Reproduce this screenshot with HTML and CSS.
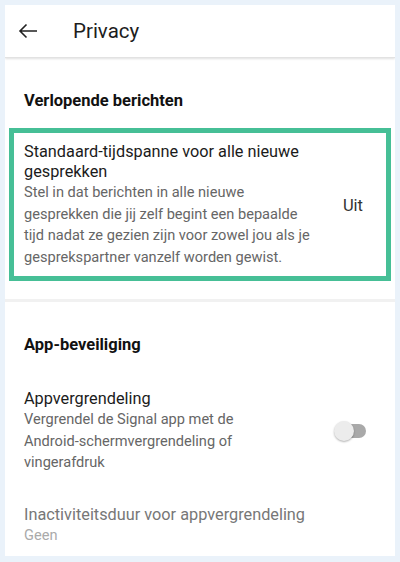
FILE: index.html
```html
<!DOCTYPE html>
<html lang="nl">
<head>
  <meta charset="UTF-8">
  <title>Privacy</title>
  <link rel="stylesheet" href="styles.css">
</head>
<body>
  <div class="screen">
    <div class="toolbar">
      <svg class="back" width="20" height="16" viewBox="0 0 20 16">
        <path d="M19 8H2M8.5 1.5L2 8l6.5 6.5" fill="none" stroke="#222" stroke-width="1.6"/>
      </svg>
      <div class="title">Privacy</div>
    </div>

    <div class="section">
      <div class="section-title">Verlopende berichten</div>
      <div class="pref highlight">
        <div class="pref-text">
          <div class="pref-title">Standaard-tijdspanne voor alle nieuwe gesprekken</div>
          <div class="pref-summary">Stel in dat berichten in alle nieuwe gesprekken die jij zelf begint een bepaalde tijd nadat ze gezien zijn voor zowel jou als je gesprekspartner vanzelf worden gewist.</div>
        </div>
        <div class="pref-value">Uit</div>
      </div>
    </div>

    <div class="divider"></div>

    <div class="section">
      <div class="section-title">App-beveiliging</div>
      <div class="pref lock">
        <div class="pref-text">
          <div class="pref-title">Appvergrendeling</div>
          <div class="pref-summary">Vergrendel de Signal app met de Android-schermvergrendeling of vingerafdruk</div>
        </div>
        <div class="switch"><div class="thumb"></div></div>
      </div>
      <div class="pref disabled">
        <div class="pref-text">
          <div class="pref-title">Inactiviteitsduur voor appvergrendeling</div>
          <div class="pref-summary">Geen</div>
        </div>
      </div>
    </div>
  </div>
</body>
</html>
```

FILE: styles.css
```css
html, body {
  margin: 0;
  padding: 0;
  background: #eaf2fa;
}

body {
  font-family: Roboto, "Noto Sans", Arial, sans-serif;
  padding: 5px 5px 6px 5px;
  height: 562px;
  box-sizing: border-box;
}

.screen {
  background: white;
  height: 551px;
  overflow: hidden;
}

.toolbar {
  height: 52px;
  display: flex;
  align-items: center;
  border-bottom: 1px solid #e2e2e2;
  box-shadow: 0 1px 2px rgba(0,0,0,0.12);
}

.back {
  margin-left: 13px;
}

.title {
  margin-left: 35px;
  font-size: 20.5px;
  color: #1d1d1d;
}

.section-title {
  font-size: 16.5px;
  font-weight: bold;
  color: #111;
  padding: 33px 0 0 19px;
  height: 37px;
}

.pref {
  display: flex;
  align-items: center;
  padding: 0 19px;
}

.highlight {
  margin: 0 4px;
  padding: 9px 23px 8px 10px;
  border: 5px solid #46bf96;
}

.lock {
  margin-top: 17px;
  padding-right: 29px;
}

.lock .pref-summary {
  max-width: 250px;
}

.pref-text {
  flex: 1;
}

.pref-title {
  font-size: 16.3px;
  line-height: 20px;
  color: #1b1b1b;
}

.pref-summary {
  font-size: 14.6px;
  line-height: 21.5px;
  color: #666;
  max-width: 287px;
}

.pref-value {
  font-size: 16.5px;
  color: #333;
}

.divider {
  height: 3px;
  background: #f1f1f1;
  margin-top: 18px;
}

.switch {
  position: relative;
  width: 23px;
  height: 14px;
  border-radius: 7px;
  background: #a9a9a9;
}

.thumb {
  position: absolute;
  left: -9px;
  top: -3px;
  width: 20px;
  height: 20px;
  border-radius: 50%;
  background: #ececec;
  box-shadow: 0 1px 2px rgba(0,0,0,0.3);
}

.disabled {
  margin-top: 31px;
}

.disabled .pref-title {
  color: #777;
}

.disabled .pref-summary {
  color: #aaa;
}
```
